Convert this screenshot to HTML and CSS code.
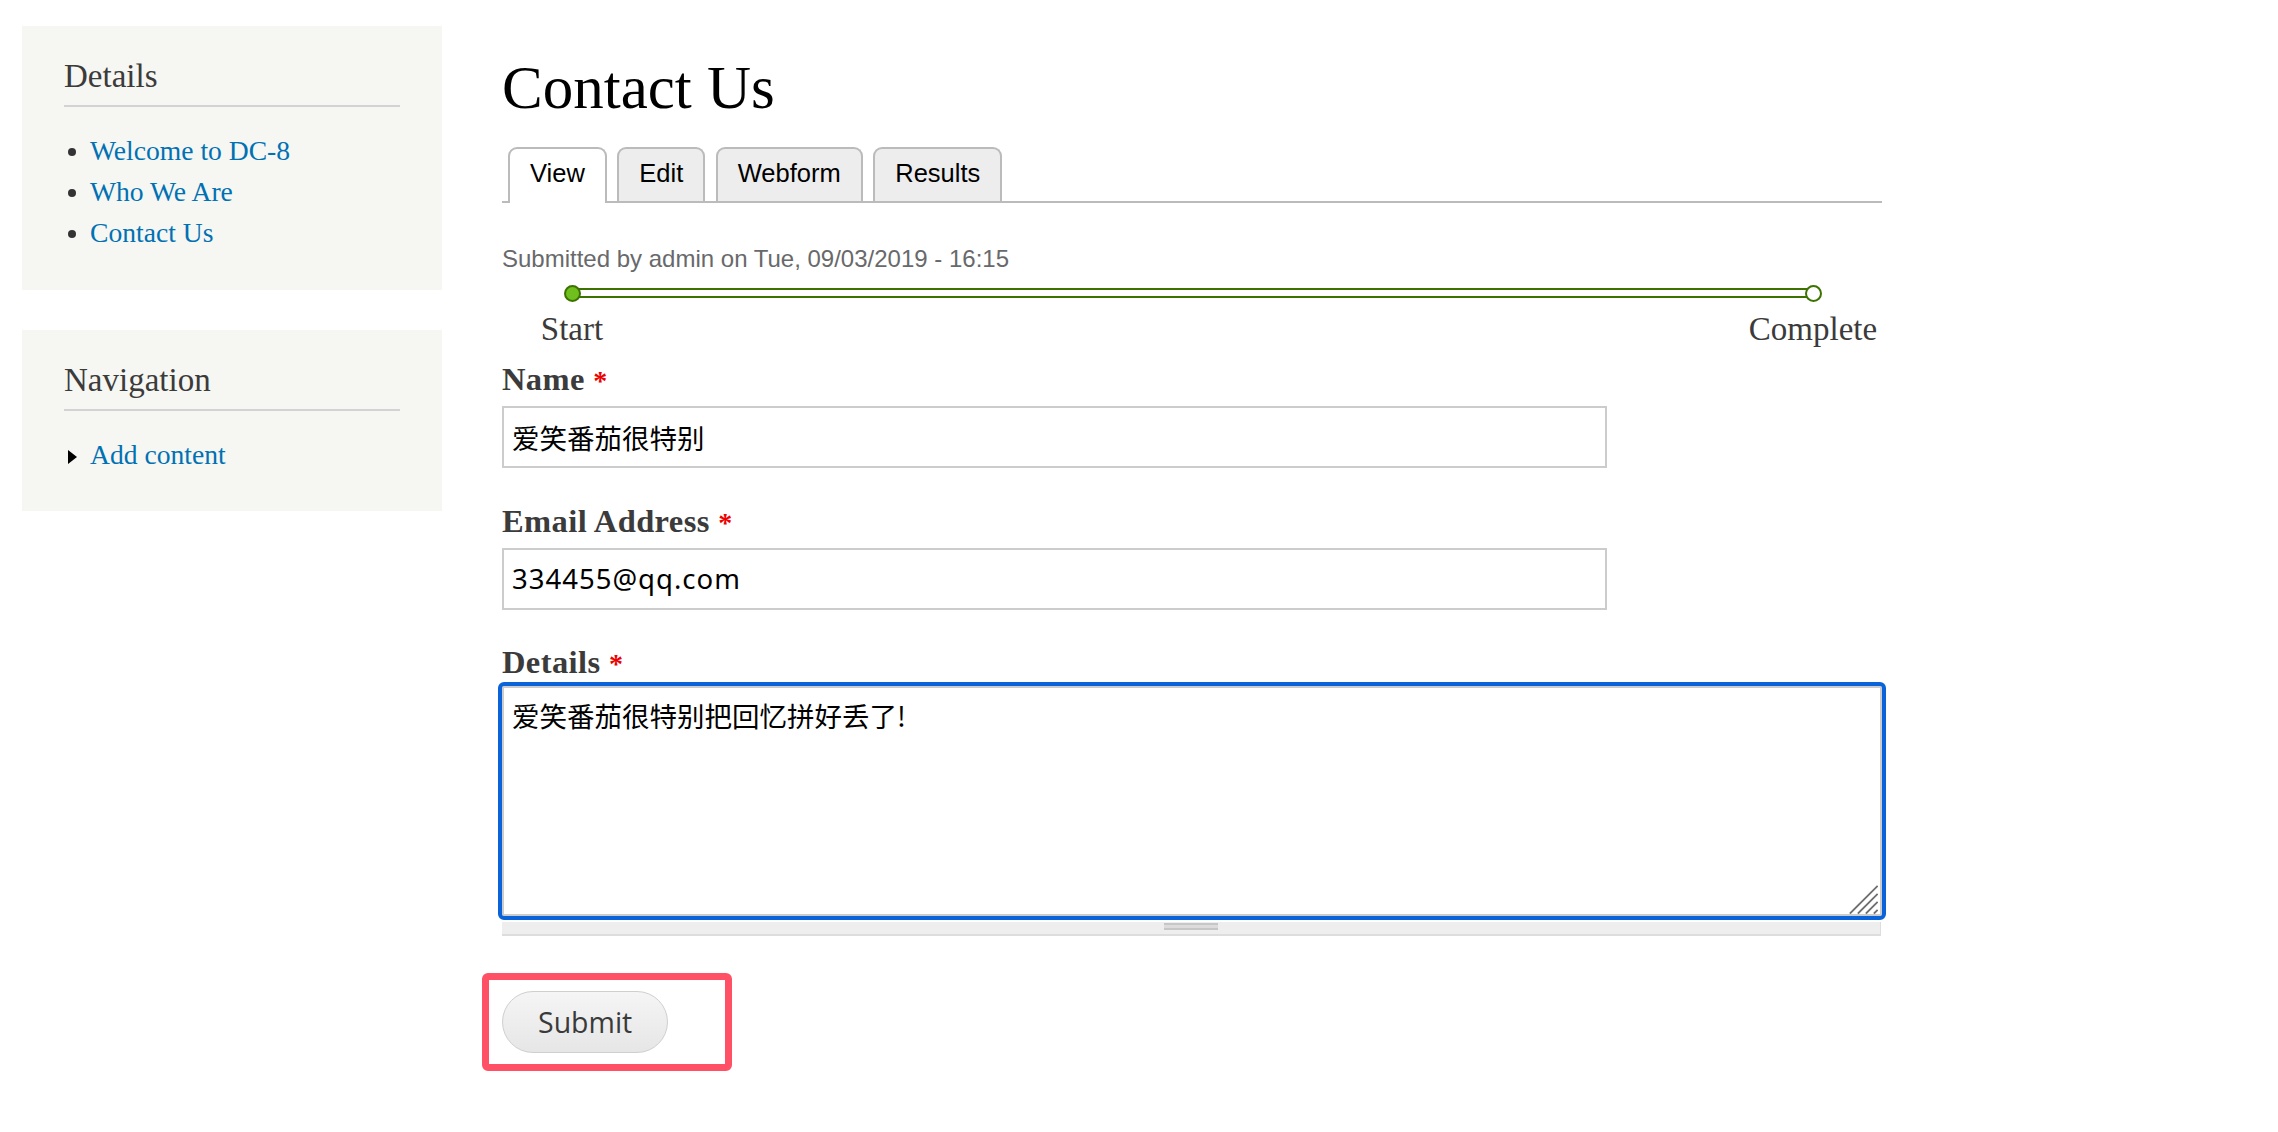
FILE: index.html
```html
<!DOCTYPE html>
<html lang="en">
<head>
<meta charset="utf-8">
<title>Contact Us</title>
<link rel="stylesheet" href="styles.css">
</head>
<body>
<div class="page">
  <aside class="sidebar">
    <section class="block">
      <h2 class="block-title">Details</h2>
      <ul class="menu">
        <li class="bullet"><a href="#">Welcome to DC-8</a></li>
        <li class="bullet"><a href="#">Who We Are</a></li>
        <li class="bullet"><a href="#">Contact Us</a></li>
      </ul>
    </section>
    <section class="block">
      <h2 class="block-title">Navigation</h2>
      <ul class="menu">
        <li class="collapsed"><a href="#">Add content</a></li>
      </ul>
    </section>
  </aside>

  <main class="content">
    <h1 class="title">Contact Us</h1>
    <ul class="tabs">
      <li class="tab active">View</li>
      <li class="tab">Edit</li>
      <li class="tab">Webform</li>
      <li class="tab">Results</li>
    </ul>

    <div class="submitted">Submitted by admin on Tue, 09/03/2019 - 16:15</div>

    <div class="track">
      <div class="bar"></div>
      <span class="dot dot-start"></span>
      <span class="dot dot-end"></span>
    </div>
    <div class="steps">
      <span class="step"><span>Start</span></span>
      <span class="step"><span>Complete</span></span>
    </div>

    <form class="form">
      <label class="label label-first">Name <span class="req">*</span></label>
      <input class="field" type="text" value="爱笑番茄很特别">

      <label class="label">Email Address <span class="req">*</span></label>
      <input class="field field-email" type="text" value="334455@qq.com">

      <label class="label label-details">Details <span class="req">*</span></label>
      <div class="ta-wrap">
        <textarea class="area focused">爱笑番茄很特别把回忆拼好丢了!</textarea>
        <svg class="grip" width="29" height="29" viewBox="0 0 29 29">
          <g stroke="#6e6e6e" stroke-width="1.8" stroke-linecap="square">
            <line x1="1.5" y1="28" x2="28" y2="1.5"/>
            <line x1="9.5" y1="28" x2="28" y2="9.5"/>
            <line x1="17.5" y1="28" x2="28" y2="17.5"/>
            <line x1="25.5" y1="28" x2="28" y2="25.5"/>
          </g>
        </svg>
      </div>
      <div class="grippie"><div class="grippie-handle"></div></div>

      <div class="highlight">
        <button type="button" class="submit">Submit</button>
      </div>
    </form>
  </main>
</div>
</body>
</html>
```

FILE: styles.css
```css
* {
  box-sizing: border-box;
}

body {
  margin: 0;
  background: #ffffff;
  font-family: "Liberation Serif", "Times New Roman", serif;
  color: #3b3b3b;
}

.page {
  display: flex;
  align-items: flex-start;
  padding: 26px 0 0 22px;
  gap: 60px;
}

/* Sidebar */
.sidebar {
  width: 420px;
  flex: none;
  display: flex;
  flex-direction: column;
  gap: 40.5px;
}

.block {
  background: #f6f6f2;
  padding: 29.5px 42px 36px 42px;
}

.block-title {
  margin: 0;
  font-weight: normal;
  font-size: 33px;
  line-height: 40px;
  color: #3b3b3b;
  padding-bottom: 9px;
  border-bottom: 2px solid #d3d3d3;
}

.menu {
  list-style: none;
  margin: 23px 0 0;
  padding: 0;
}

.menu li {
  font-size: 27.6px;
  line-height: 41.4px;
  white-space: nowrap;
}

.menu a {
  color: #0071b3;
  text-decoration: none;
}

.bullet::before {
  content: "";
  display: inline-block;
  width: 8px;
  height: 8px;
  border-radius: 50%;
  background: #333333;
  margin: 0 14px 0 4px;
  vertical-align: 4px;
}

.collapsed::before {
  content: "";
  display: inline-block;
  width: 0;
  height: 0;
  border-left: 9px solid #000000;
  border-top: 7px solid transparent;
  border-bottom: 7px solid transparent;
  margin: 0 13px 0 4px;
  vertical-align: 0;
}

/* Main */
.content {
  width: 1380px;
  flex: none;
}

.title {
  margin: 27px 0 0;
  font-weight: normal;
  font-size: 61px;
  line-height: 70.8px;
  color: #000000;
}

.tabs {
  list-style: none;
  margin: 23px 0 0;
  padding: 0 0 0 6px;
  display: flex;
  align-items: flex-end;
  gap: 10.5px;
  border-bottom: 2px solid #bbbbbb;
}

.tab {
  font-family: "Liberation Sans", Arial, sans-serif;
  font-size: 25.5px;
  line-height: 30px;
  color: #000000;
  background: #ededed;
  border: 2px solid #bbbbbb;
  border-bottom: 0;
  border-radius: 9px 9px 0 0;
  padding: 9px 20px 13px;
}

.tab.active {
  background: #ffffff;
  margin-bottom: -2px;
  padding-bottom: 15px;
}

.submitted {
  margin-top: 39.6px;
  font-family: "Liberation Sans", Arial, sans-serif;
  font-size: 24px;
  line-height: 34px;
  color: #68696b;
}

/* Progress bar */
.track {
  position: relative;
  height: 17px;
  margin: 8.5px 69px 0 70px;
  display: flex;
  align-items: center;
}

.bar {
  flex: 1;
  height: 10px;
  border: 2px solid #3c7300;
  background: #ffffff;
}

.dot {
  position: absolute;
  top: 0;
  width: 17px;
  height: 17px;
  border-radius: 50%;
  border: 2px solid #3c7300;
}

.dot-start {
  left: -8.5px;
  background: #6fbf1e;
}

.dot-end {
  right: -8.5px;
  background: #ffffff;
}

.steps {
  display: flex;
  justify-content: space-between;
  margin: 9.5px 69px 0 70px;
  font-size: 33px;
  line-height: 36px;
  color: #3b3b3b;
}

.step {
  width: 0;
  display: flex;
  justify-content: center;
  white-space: nowrap;
}

/* Form */
.form {
  display: flex;
  flex-direction: column;
  align-items: flex-start;
}

.label {
  display: block;
  font-weight: bold;
  font-size: 32.5px;
  letter-spacing: 0.4px;
  line-height: 37px;
  color: #3b3b3b;
  margin-top: 35px;
}

.label-first {
  margin-top: 13.5px;
}

.req {
  color: #ee0000;
  font-size: 28px;
  font-weight: bold;
}

.field {
  display: block;
  margin: 7px 0 0;
  width: 1105px;
  height: 62px;
  border: 2px solid #cccccc;
  border-radius: 0;
  padding: 0 8px;
  font-family: "Noto Sans CJK SC", sans-serif;
  font-size: 27.5px;
  color: #000000;
  background: #ffffff;
  outline: none;
}

.field-email {
  font-family: "Noto Sans", "Noto Sans CJK SC", sans-serif;
  letter-spacing: 1px;
  margin-top: 7px;
}

.label-details {
  margin-top: 34px;
}

.ta-wrap {
  position: relative;
  width: 1380px;
  margin-top: 4.5px;
}

.area {
  display: block;
  width: 1380px;
  height: 229.5px;
  margin: 0;
  border: 2px solid #cccccc;
  padding: 8px 8px;
  font-family: "Noto Sans CJK SC", sans-serif;
  font-size: 27.5px;
  line-height: 1.45;
  color: #000000;
  resize: none;
  background: #ffffff;
}

.area.focused {
  outline: 4px solid #0b63d9;
  outline-offset: 0;
  border-radius: 2px;
}

.grip {
  position: absolute;
  right: 4px;
  bottom: 2px;
}

.grippie {
  width: 1379px;
  height: 13.5px;
  margin-top: 6.5px;
  background: #eeeeee;
  border: 1px solid #dddddd;
  border-top: 0;
  border-left: 0;
  border-bottom-width: 2px;
  display: flex;
  justify-content: center;
}

.grippie-handle {
  width: 54px;
  height: 7px;
  margin-top: 1px;
  border-top: 2px solid #c6c6c6;
  border-bottom: 2px solid #c6c6c6;
  background: #dcdcdc;
}

.highlight {
  margin: 37.5px 0 0 -20px;
  border: 7px solid #ff5065;
  border-radius: 6px;
  padding: 11px 57px 11px 13px;
}

.submit {
  display: block;
  height: 62px;
  padding: 0 35px;
  border: 1.5px solid #cfcfcf;
  border-radius: 31px;
  background: linear-gradient(#f5f5f5, #e6e6e6);
  font-family: "Open Sans", "Noto Sans", sans-serif;
  font-size: 28.5px;
  color: #3a3a3a;
  cursor: pointer;
}
```
